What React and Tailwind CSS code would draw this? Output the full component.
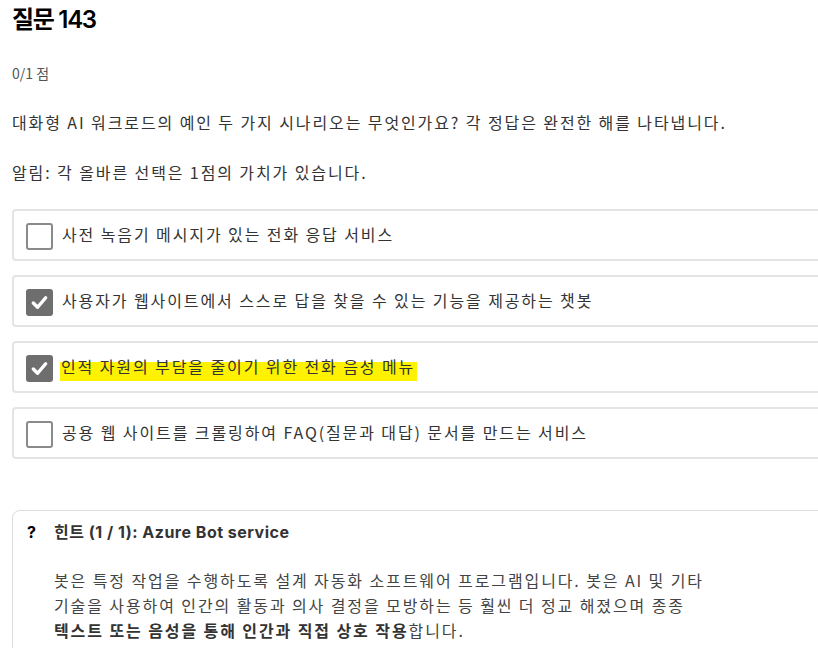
import React from "react";

const ko = { fontFamily: '"Noto Sans CJK KR", "Noto Sans", sans-serif' };
const head = { fontFamily: 'Inter, "Noto Sans CJK KR", sans-serif' };

function Box({ checked }) {
  if (checked) {
    return (
      <div className="w-[27px] h-[27px] rounded-[3px] bg-[#6e6e6e] flex items-center justify-center shrink-0">
        <svg width="19" height="19" viewBox="0 0 20 20">
          <path d="M3.5 10.5 L8 15 L16.5 5" fill="none" stroke="white" strokeWidth="3.6" strokeLinecap="round" strokeLinejoin="round" />
        </svg>
      </div>
    );
  }
  return <div className="w-[27px] h-[27px] rounded-[3px] border-2 border-[#8a8a8a] bg-white shrink-0" />;
}

function Option({ checked, children }) {
  return (
    <div className="h-[52px] border-2 border-[#e4e4e4] rounded-[4px] flex items-center pl-3 gap-[9px] text-[16px] text-[#333] tracking-[1.9px]">
      <div className="pt-[3px]"><Box checked={checked} /></div>
      <div className="-mt-[2px]">{children}</div>
    </div>
  );
}

export default function App() {
  return (
    <div className="w-full overflow-hidden bg-white h-[648px]" style={ko}>
      <div className="w-[880px] pl-3">
        <h1 className="text-[24px] leading-[32px] font-semibold text-black pt-[4px] tracking-[-1.3px]" style={head}>질문 143</h1>
        <div className="mt-[27px] text-[14px] leading-[20px] text-[#555]">0/1 점</div>
        <p className="mt-[27px] text-[16px] leading-[24px] text-[#333] tracking-[1.9px]">대화형 AI 워크로드의 예인 두 가지 시나리오는 무엇인가요? 각 정답은 완전한 해를 나타냅니다.</p>
        <p className="mt-[26px] text-[16px] leading-[24px] text-[#333] tracking-[1.9px]">알림: 각 올바른 선택은 1점의 가치가 있습니다.</p>
        <div className="mt-[25px] flex flex-col gap-[14px]">
          <Option>사전 녹음기 메시지가 있는 전화 응답 서비스</Option>
          <Option checked>사용자가 웹사이트에서 스스로 답을 찾을 수 있는 기능을 제공하는 챗봇</Option>
          <Option checked>
            <span className="bg-[linear-gradient(transparent_35%,#fff200_35%)] pt-[2px] pb-[3px] pl-[1px] pr-[2px] -ml-[2px]">인적 자원의 부담을 줄이기 위한 전화 음성 메뉴</span>
          </Option>
          <Option>공용 웹 사이트를 크롤링하여 FAQ(질문과 대답) 문서를 만드는 서비스</Option>
        </div>
        <div className="mt-[51px] border border-[#dcdcdc] rounded-[8px] pt-[9px] pb-6 h-[200px]">
          <div className="flex items-center text-[16px] leading-[24px] font-bold" style={head}>
            <span className="w-[41px] pl-[14px] text-black">?</span>
            <span className="text-[#333] tracking-[0.5px]">힌트 (1 / 1): Azure Bot service</span>
          </div>
          <div className="mt-[24px] pl-[41px] text-[16px] leading-[25px] text-[#444] tracking-[1.9px] whitespace-nowrap">
            봇은 특정 작업을 수행하도록 설계 자동화 소프트웨어 프로그램입니다. 봇은 AI 및 기타
            <br />
            기술을 사용하여 인간의 활동과 의사 결정을 모방하는 등 훨씬 더 정교 해졌으며 종종
            <br />
            <b className="text-[#333]">텍스트 또는 음성을 통해 인간과 직접 상호 작용</b>합니다.
          </div>
        </div>
      </div>
    </div>
  );
}
